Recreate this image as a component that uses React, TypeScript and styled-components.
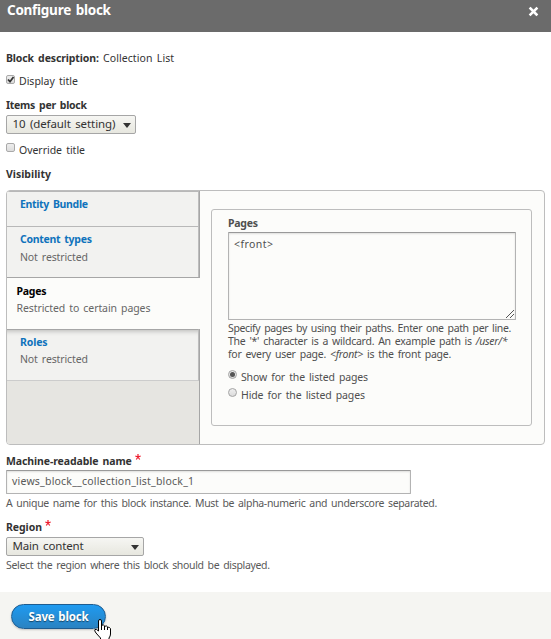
import React from "react";
import styled, { createGlobalStyle } from "styled-components";

const GlobalStyle = createGlobalStyle`
  *, *::before, *::after { box-sizing: border-box; }
  body { margin: 0; background: #fff; overflow: hidden; }
`;

const Dialog = styled.div`
  position: relative;
  display: flex;
  flex-direction: column;
  height: 639px;
  font: 10.5px/14px "Noto Sans", "Open Sans", sans-serif;
  word-spacing: 1.5px;
  color: #333;
  white-space: nowrap;
`;

const TitleBar = styled.header`
  display: flex;
  justify-content: space-between;
  height: 32px;
  padding: 0 12px 0 7px;
  background: #6b6b6b;
  color: #fff;
`;

const Title = styled.h1`
  margin: 0;
  font-size: 13.5px;
  line-height: 21px;
  letter-spacing: -0.26px;
`;

const CloseIcon = styled.svg`
  width: 11px;
  height: 11px;
  margin-top: 6px;
`;

const Form = styled.main`
  flex: 1;
  padding: 19px 6px 0;
`;

const Text = styled.span<{ $ls?: number }>`
  letter-spacing: ${(p) => p.$ls ?? 0}px;
`;

const Line = styled.div<{ $top?: number }>`
  display: flex;
  height: 14px;
  margin-top: ${(p) => p.$top ?? 0}px;
`;

const Label = styled.label<{ $ls?: number; $top?: number }>`
  display: flex;
  height: 14px;
  margin-top: ${(p) => p.$top ?? 0}px;
  font-weight: 700;
  letter-spacing: ${(p) => p.$ls ?? 0}px;
`;

const DescriptionKey = styled.strong`
  width: 97px;
  letter-spacing: -0.12px;
`;

const Required = styled.svg`
  width: 6px;
  height: 6px;
  margin: 0 0 0 3px;
`;

const Hint = styled.div<{ $ls: number; $top: number }>`
  height: 14px;
  margin-top: ${(p) => p.$top}px;
  color: #595959;
  letter-spacing: ${(p) => p.$ls}px;
`;

const CheckBox = styled.span<{ $drop?: number }>`
  display: flex;
  width: 9px;
  height: 9px;
  margin: ${(p) => p.$drop ?? 0}px 4px 0 0;
  border: 1px solid #a9a9a9;
  border-radius: 2px;
  background: linear-gradient(#eee, #dcdcdc);
  svg { width: 9px; height: 9px; margin: -1px; overflow: visible; }
`;

const Select = styled.div<{ $width: number; $top: number; $ls: number }>`
  display: flex;
  align-items: center;
  justify-content: space-between;
  width: ${(p) => p.$width}px;
  height: 19px;
  margin-top: ${(p) => p.$top}px;
  padding: 0 4px 1px 5.5px;
  border: 1px solid #a6a6a6;
  border-radius: 2px;
  background: linear-gradient(#f6f6f3, #e7e7df);
  font-size: 11.5px;
  letter-spacing: ${(p) => p.$ls}px;
  svg { width: 8px; height: 5px; margin-top: 3px; }
`;

const Tabs = styled.section`
  display: flex;
  width: 539px;
  height: 255px;
  margin-top: 9px;
  border: 1px solid #bdbdbd;
  border-radius: 4px;
  background: #fcfcfa;
  overflow: hidden;
`;

const TabMenu = styled.nav`
  width: 193px;
  height: 100%;
  background: linear-gradient(#a6a6a6, #a6a6a6) right / 1px 100% no-repeat #e6e5e1;
`;

const Tab = styled.div<{ $height: number; $last?: boolean }>`
  width: 192px;
  height: ${(p) => p.$height}px;
  padding: 5px 0 0 13px;
  border-top: 1px solid ${(p) => (p.$last ? "#a6a6a6" : "#b8b8b8")};
  border-right: 1px solid #bdbdbd;
  border-bottom: ${(p) => (p.$last ? 1 : 0)}px solid #ccc;
  background: #f2f2f0;
  box-shadow: ${(p) => (p.$last ? "inset 0 5px 5px -4px rgba(0, 0, 0, 0.25)" : "none")};
`;

const SelectedTab = styled.div`
  width: 193px;
  height: 52px;
  padding: 6px 0 0 9.5px;
  border-top: 1px solid #a6a6a6;
  background: #fcfcfa;
`;

const TabTitle = styled.div<{ $ls: number; $active?: boolean }>`
  height: 14px;
  font-weight: 700;
  color: ${(p) => (p.$active ? "#000" : "#0f73bc")};
  letter-spacing: ${(p) => p.$ls}px;
`;

const Summary = styled.div<{ $ls: number; $gap: number }>`
  height: 14px;
  margin-top: ${(p) => p.$gap}px;
  color: #666;
  letter-spacing: ${(p) => p.$ls}px;
`;

const Fieldset = styled.div`
  width: 321px;
  height: 217px;
  margin: 18px 0 0 11px;
  padding: 6px 15px 0 16px;
  border: 1px solid #bdbdbd;
  border-radius: 3px;
  color: #4f4f4f;
`;

const TextBox = styled.div`
  display: flex;
  justify-content: space-between;
  width: 288px;
  height: 88px;
  margin-top: 2px;
  padding: 4px 1px 1px 5px;
  border: 1px solid #b3b3b3;
  border-top-color: #999;
  border-radius: 1px;
  background: #fcfcfa;
  box-shadow: inset 0 1px 2px rgba(0, 0, 0, 0.12);
`;

const Grip = styled.svg`
  align-self: flex-end;
  width: 8px;
  height: 8px;
`;

const Help = styled.div`
  margin-top: 2px;
  line-height: 13px;
  div { height: 13px; }
`;

const Radio = styled.span`
  display: flex;
  align-items: center;
  justify-content: center;
  width: 9px;
  height: 9px;
  margin: 0 4px 0 0;
  border: 1px solid #a3a3a3;
  border-radius: 50%;
  background: linear-gradient(#eee, #dcdcdc);
`;

const RadioDot = styled.span`
  width: 5px;
  height: 5px;
  border-radius: 50%;
  background: #555;
`;

const Input = styled.div`
  width: 405px;
  height: 24px;
  margin-top: 2px;
  padding: 3px 5px;
  border: 1px solid #b3b3b3;
  border-top-color: #999;
  border-radius: 1px;
  background: #fcfcfa;
  box-shadow: inset 0 1px 2px rgba(0, 0, 0, 0.12);
  letter-spacing: 0.21px;
  color: #595959;
`;

const Footer = styled.footer`
  height: 47px;
  padding: 12px 11px;
  background: #f5f5f2;
`;

const SaveButton = styled.button`
  display: flex;
  justify-content: center;
  width: 95px;
  height: 25px;
  padding: 0;
  border: 1px solid #1e5c90;
  border-radius: 13px;
  background: linear-gradient(#1f9af0, #2a83c2);
  box-shadow: 0 1px 2px rgba(0, 0, 0, 0.2);
  font: 700 11.5px/23px "Noto Sans", "Open Sans", sans-serif;
  letter-spacing: -0.15px;
  word-spacing: 1px;
  color: #fff;
  text-shadow: 0 1px 1px rgba(0, 0, 0, 0.5);
`;

const Pointer = styled.svg`
  position: absolute;
  left: 94px;
  top: 619px;
  width: 18px;
  height: 20px;
`;

const Arrow = () => (
  <svg viewBox="0 0 8 5"><path d="M0 0h8L4 5z" fill="#333" /></svg>
);

const Star = () => (
  <Required viewBox="0 0 6 6">
    <path d="M3 0v3M3 3L.3 2M3 3l2.700-1M3 3L1.300 5.500M3 3l1.700 2.500" stroke="#ee1c2e" strokeWidth="1.200" />
  </Required>
);

export default function App() {
  return (
    <Dialog>
      <GlobalStyle />
      <TitleBar>
        <Title>Configure block</Title>
        <CloseIcon viewBox="0 0 11 11">
          <path d="M2.500 2.500l6 6M8.500 2.500l-6 6" stroke="#fff" strokeWidth="2.500" strokeLinecap="square" />
        </CloseIcon>
      </TitleBar>
      <Form>
        <Line>
          <DescriptionKey>Block description:</DescriptionKey>
          <Text $ls={0.08}>Collection List</Text>
        </Line>
        <Line $top={9}>
          <CheckBox $drop={1}>
            <svg viewBox="0 0 9 9"><path d="M2 4.500l2 2.200L7.500 2" fill="none" stroke="#333" strokeWidth="1.800" /></svg>
          </CheckBox>
          <Text>Display title</Text>
        </Line>
        <Label $top={10} $ls={-0.27}>Items per block</Label>
        <Select $width={130} $top={3} $ls={-0.09}>10 (default setting)<Arrow /></Select>
        <Line $top={9}>
          <CheckBox />
          <Text $ls={-0.03}>Override title</Text>
        </Line>
        <Label $top={10}>Visibility</Label>
        <Tabs>
          <TabMenu>
            <Tab $height={35}>
              <TabTitle $ls={-0.32}>Entity Bundle</TabTitle>
            </Tab>
            <Tab $height={51}>
              <TabTitle $ls={-0.28}>Content types</TabTitle>
              <Summary $ls={-0.12} $gap={4}>Not restricted</Summary>
            </Tab>
            <SelectedTab>
              <TabTitle $ls={-0.25} $active>Pages</TabTitle>
              <Summary $ls={-0.09} $gap={3}>Restricted to certain pages</Summary>
            </SelectedTab>
            <Tab $height={52} $last>
              <TabTitle $ls={-0.15}>Roles</TabTitle>
              <Summary $ls={-0.12} $gap={3}>Not restricted</Summary>
            </Tab>
          </TabMenu>
          <Fieldset>
            <Label $ls={-0.25}>Pages</Label>
            <TextBox>
              <Text $ls={0.44}>&lt;front&gt;</Text>
              <Grip viewBox="0 0 8 8">
                <path d="M0 8L8 0M4 8l4-4" stroke="#555" />
              </Grip>
            </TextBox>
            <Help>
              <div><Text $ls={-0.36}>Specify pages by using their paths. Enter one path per line.</Text></div>
              <div><Text $ls={-0.26}>The '*' character is a wildcard. An example path is <em>/user/*</em></Text></div>
              <div><Text $ls={-0.25}>for every user page. <em>&lt;front&gt;</em> is the front page.</Text></div>
            </Help>
            <Line $top={9}>
              <Radio><RadioDot /></Radio>
              <Text $ls={-0.14}>Show for the listed pages</Text>
            </Line>
            <Line $top={4}>
              <Radio />
              <Text $ls={-0.11}>Hide for the listed pages</Text>
            </Line>
          </Fieldset>
        </Tabs>
        <Label $top={9} $ls={-0.1}>Machine-readable name<Star /></Label>
        <Input>views_block__collection_list_block_1</Input>
        <Hint $top={2} $ls={-0.325}>
          A unique name for this block instance. Must be alpha-numeric and underscore separated.
        </Hint>
        <Label $top={10} $ls={-0.06}>Region<Star /></Label>
        <Select $width={138} $top={3} $ls={-0.17}>Main content<Arrow /></Select>
        <Hint $top={2} $ls={-0.33}>Select the region where this block should be displayed.</Hint>
      </Form>
      <Footer>
        <SaveButton>Save block</SaveButton>
      </Footer>
      <Pointer viewBox="0 0 18 20">
        <path
          d="M4.500 12V2Q4.500.5 6 .5T7.500 2V7Q8 5.500 9.500 6T10.500 8Q11 6.500 12.500 7T13.500 9Q14 7.500 15.500 8.500T16.500 11V15Q16.500 17 15 19V21H6.500V19L2 14Q0 11.500 1 10.500T4.500 12Z"
          fill="#fff"
          stroke="#000"
        />
        <path d="M7.500 7v4M10.500 8v3M13.500 9v2" stroke="#000" />
      </Pointer>
    </Dialog>
  );
}
